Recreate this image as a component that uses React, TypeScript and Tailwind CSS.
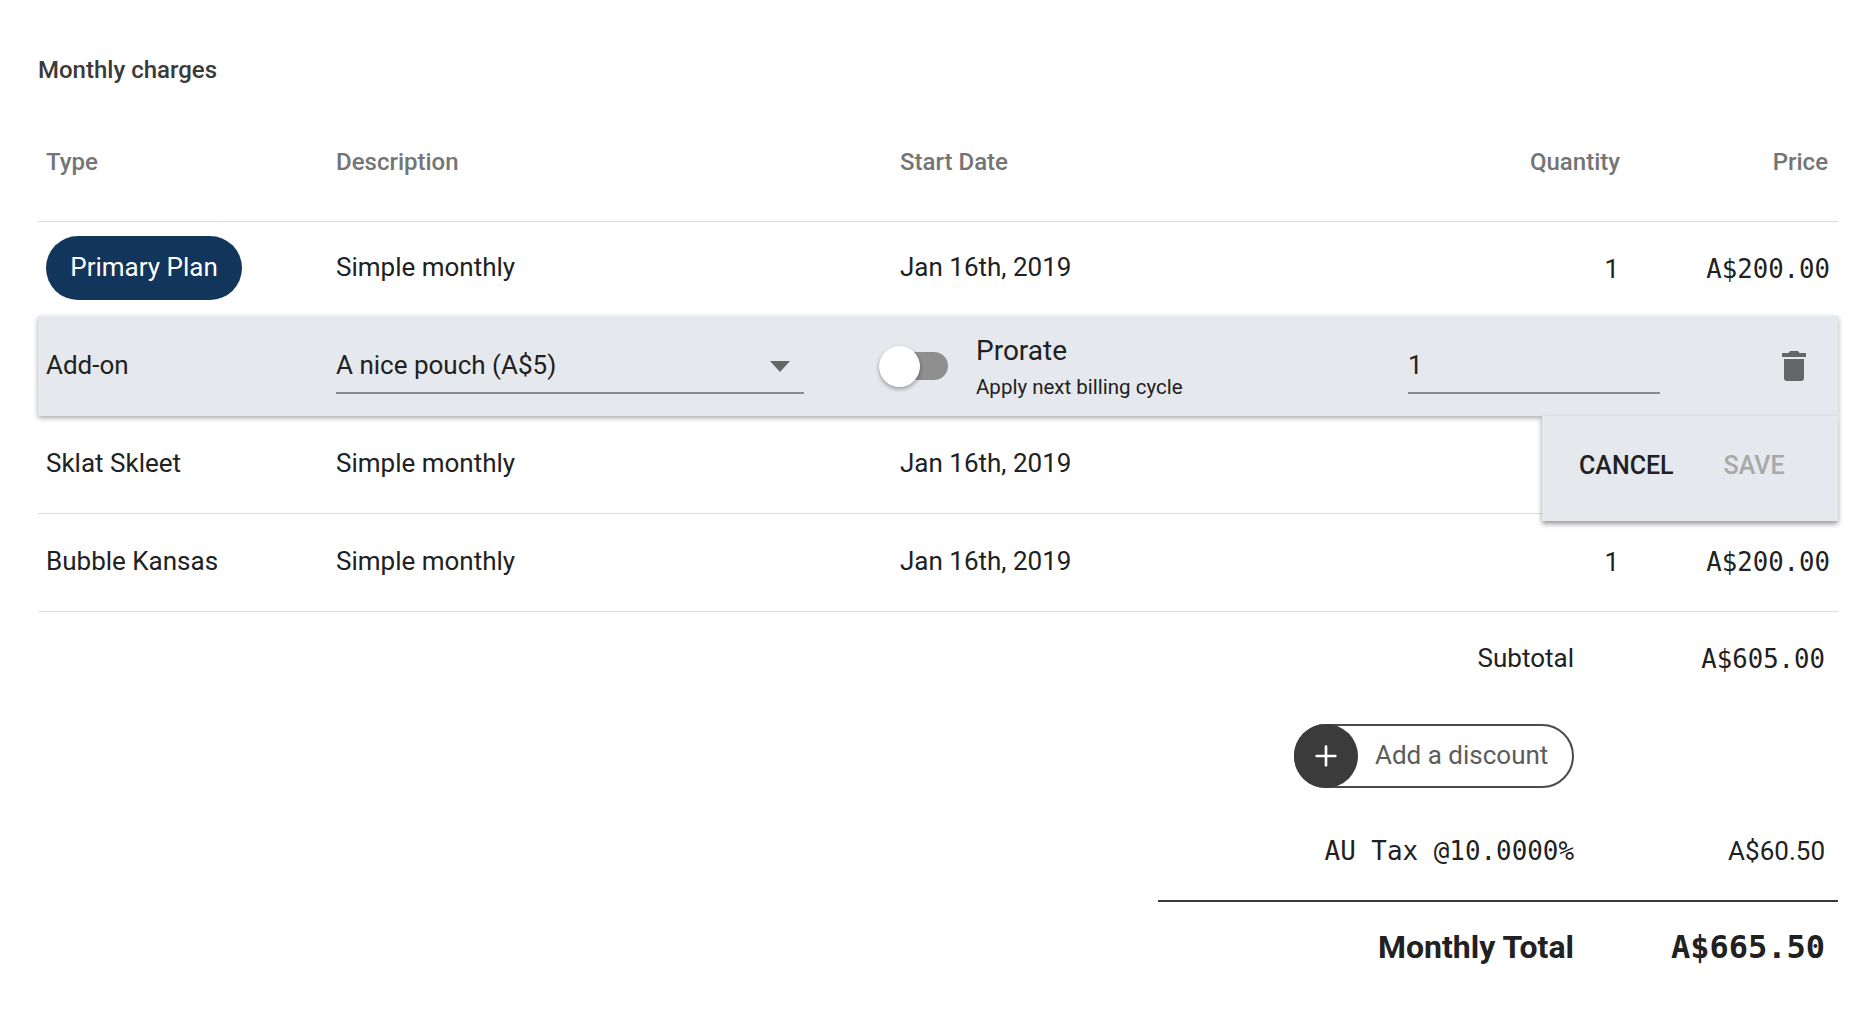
import { Plus } from "lucide-react";

const ROW_GRID = "grid grid-cols-[298px_564px_500px_220px_1fr] items-center";
const MONO = "font-['DejaVu_Sans_Mono',monospace]";

const Price = ({ value }: { value: string }) => (
  <span className={`${MONO} pr-[8px] text-right text-[25.7px]`}>{value}</span>
);

const PlanRow = ({ type, amounts = true }: { type: string; amounts?: boolean }) => (
  <div className={`${ROW_GRID} h-[98px] border-b border-[#dcdcdc] text-[26px] text-[#212121]`}>
    <span className="pl-2 -mt-[2px]">{type}</span>
    <span className="-mt-[2px]">Simple monthly</span>
    <span className="-mt-[2px]">Jan 16th, 2019</span>
    {/* the cancel/save panel sits over these on the Sklat row */}
    {amounts && <span className="pr-[1px] text-right">1</span>}
    {amounts && <Price value="A$200.00" />}
  </div>
);

const App = () => {
  return (
    <div className="min-h-[1012px] bg-white pl-[38px] pr-[36px] font-['Roboto',sans-serif] text-[#212121]">
      <div className="flex h-[140px] items-center">
        <h2 className="text-[24px] font-medium text-[#3a3a3a]">Monthly charges</h2>
      </div>

      {/* table header */}
      <div className={`${ROW_GRID} h-[82px] border-b border-[#dcdcdc] pb-[38px] text-[24px] font-medium text-[#757575]`}>
        <span className="pl-2">Type</span>
        <span>Description</span>
        <span>Start Date</span>
        <span className="text-right">Quantity</span>
        <span className="pr-[10px] text-right">Price</span>
      </div>

      <div className={`${ROW_GRID} h-[94px] text-[26px]`}>
        <div className="pl-2 -mt-[3px] flex">
          <span className="flex h-[64px] w-[196px] items-center justify-center rounded-full bg-[#12355b] text-white">
            Primary Plan
          </span>
        </div>
        <span className="-mt-[4px]">Simple monthly</span>
        <span className="-mt-[4px]">Jan 16th, 2019</span>
        <span className="pr-[1px] text-right">1</span>
        <Price value="A$200.00" />
      </div>

      {/* row being edited */}
      <div className="relative z-10 flex h-[100px] bg-[#e5e8ec] text-[26px] shadow-[0_2px_5px_rgba(0,0,0,0.35)]">
        <span className="w-[298px] pl-2 pt-[30px]">Add-on</span>
        <div className="flex h-[78px] w-[468px] justify-between border-b-2 border-[#8a8a8a] pt-[30px]">
          <span>A nice pouch (A$5)</span>
          <span className="mr-[14px] mt-[15px] h-0 w-0 border-x-[10px] border-t-[11px] border-x-transparent border-t-[#666666]" />
        </div>
        <div className="relative ml-[76px] mt-[36px] h-[28px] w-[68px] rounded-full bg-[#8f8f8f]">
          <span className="absolute -left-[1px] -top-[6px] h-[41px] w-[41px] rounded-full bg-white shadow-[0_2px_4px_rgba(0,0,0,0.35)]" />
        </div>
        <div className="ml-[28px] flex w-[432px] flex-col pt-[16px]">
          <span className="text-[28px] leading-[38px]">Prorate</span>
          <span className="text-[20.5px] leading-[34px]">Apply next billing cycle</span>
        </div>
        <div className="h-[78px] w-[252px] border-b-2 border-[#8a8a8a] pt-[30px]">1</div>
        <TrashIcon />

        <div className="absolute right-0 top-full flex h-[105px] w-[296px] items-center bg-[#e5e8ec] pb-[5px] pl-[37px] text-[25px] font-medium shadow-[0_3px_5px_rgba(0,0,0,0.4)]">
          <span className="text-[#212121]">CANCEL</span>
          <span className="ml-[50px] text-[#a8a8a8]">SAVE</span>
        </div>
      </div>

      <PlanRow type="Sklat Skleet" amounts={false} />
      <PlanRow type="Bubble Kansas" />

      {/* totals */}
      <div className="ml-auto w-[680px]">
        <div className="grid h-[92px] grid-cols-[1fr_264px] items-center text-[26px]">
          <span className="text-right">Subtotal</span>
          <span className={`${MONO} pr-[13px] pt-[2px] text-right text-[25.7px]`}>A$605.00</span>
        </div>
        <div className="flex h-[104px] items-center justify-end pr-[264px]">
          <button className="flex h-[64px] w-[280px] items-center rounded-full border-2 border-[#4a4a4a] text-[26px] text-[#5c5c5c]">
            <span className="-ml-[2px] flex h-[64px] w-[64px] items-center justify-center rounded-full bg-[#3b3b3b]">
              <Plus className="h-[32px] w-[32px] text-white" strokeWidth={2} />
            </span>
            <span className="ml-[17px] -mt-[2px]">Add a discount</span>
          </button>
        </div>
        <div className="grid h-[94px] grid-cols-[1fr_264px] items-center border-b-2 border-[#3a3a3a] pb-[6px] text-[26px]">
          <span className={`${MONO} text-right text-[25.9px]`}>AU Tax @10.0000%</span>
          <span className="pr-[13px] text-right">A$60.50</span>
        </div>
        <div className="grid h-[90px] grid-cols-[1fr_264px] items-center font-bold">
          <span className="text-right text-[32px]">Monthly Total</span>
          <span className={`${MONO} pr-[13px] text-right text-[32px]`}>A$665.50</span>
        </div>
      </div>
    </div>
  );
};

const TrashIcon = () => (
  <svg viewBox="0 0 24 30" className="ml-[122px] mt-[35px] h-[30px] w-[24px] fill-[#666666]">
    <path d="M8 0h8l1.5 2H24v4H0V2h6.5z" />
    <path d="M2 8h20v19a3 3 0 0 1-3 3H5a3 3 0 0 1-3-3z" />
  </svg>
);

export default App;
